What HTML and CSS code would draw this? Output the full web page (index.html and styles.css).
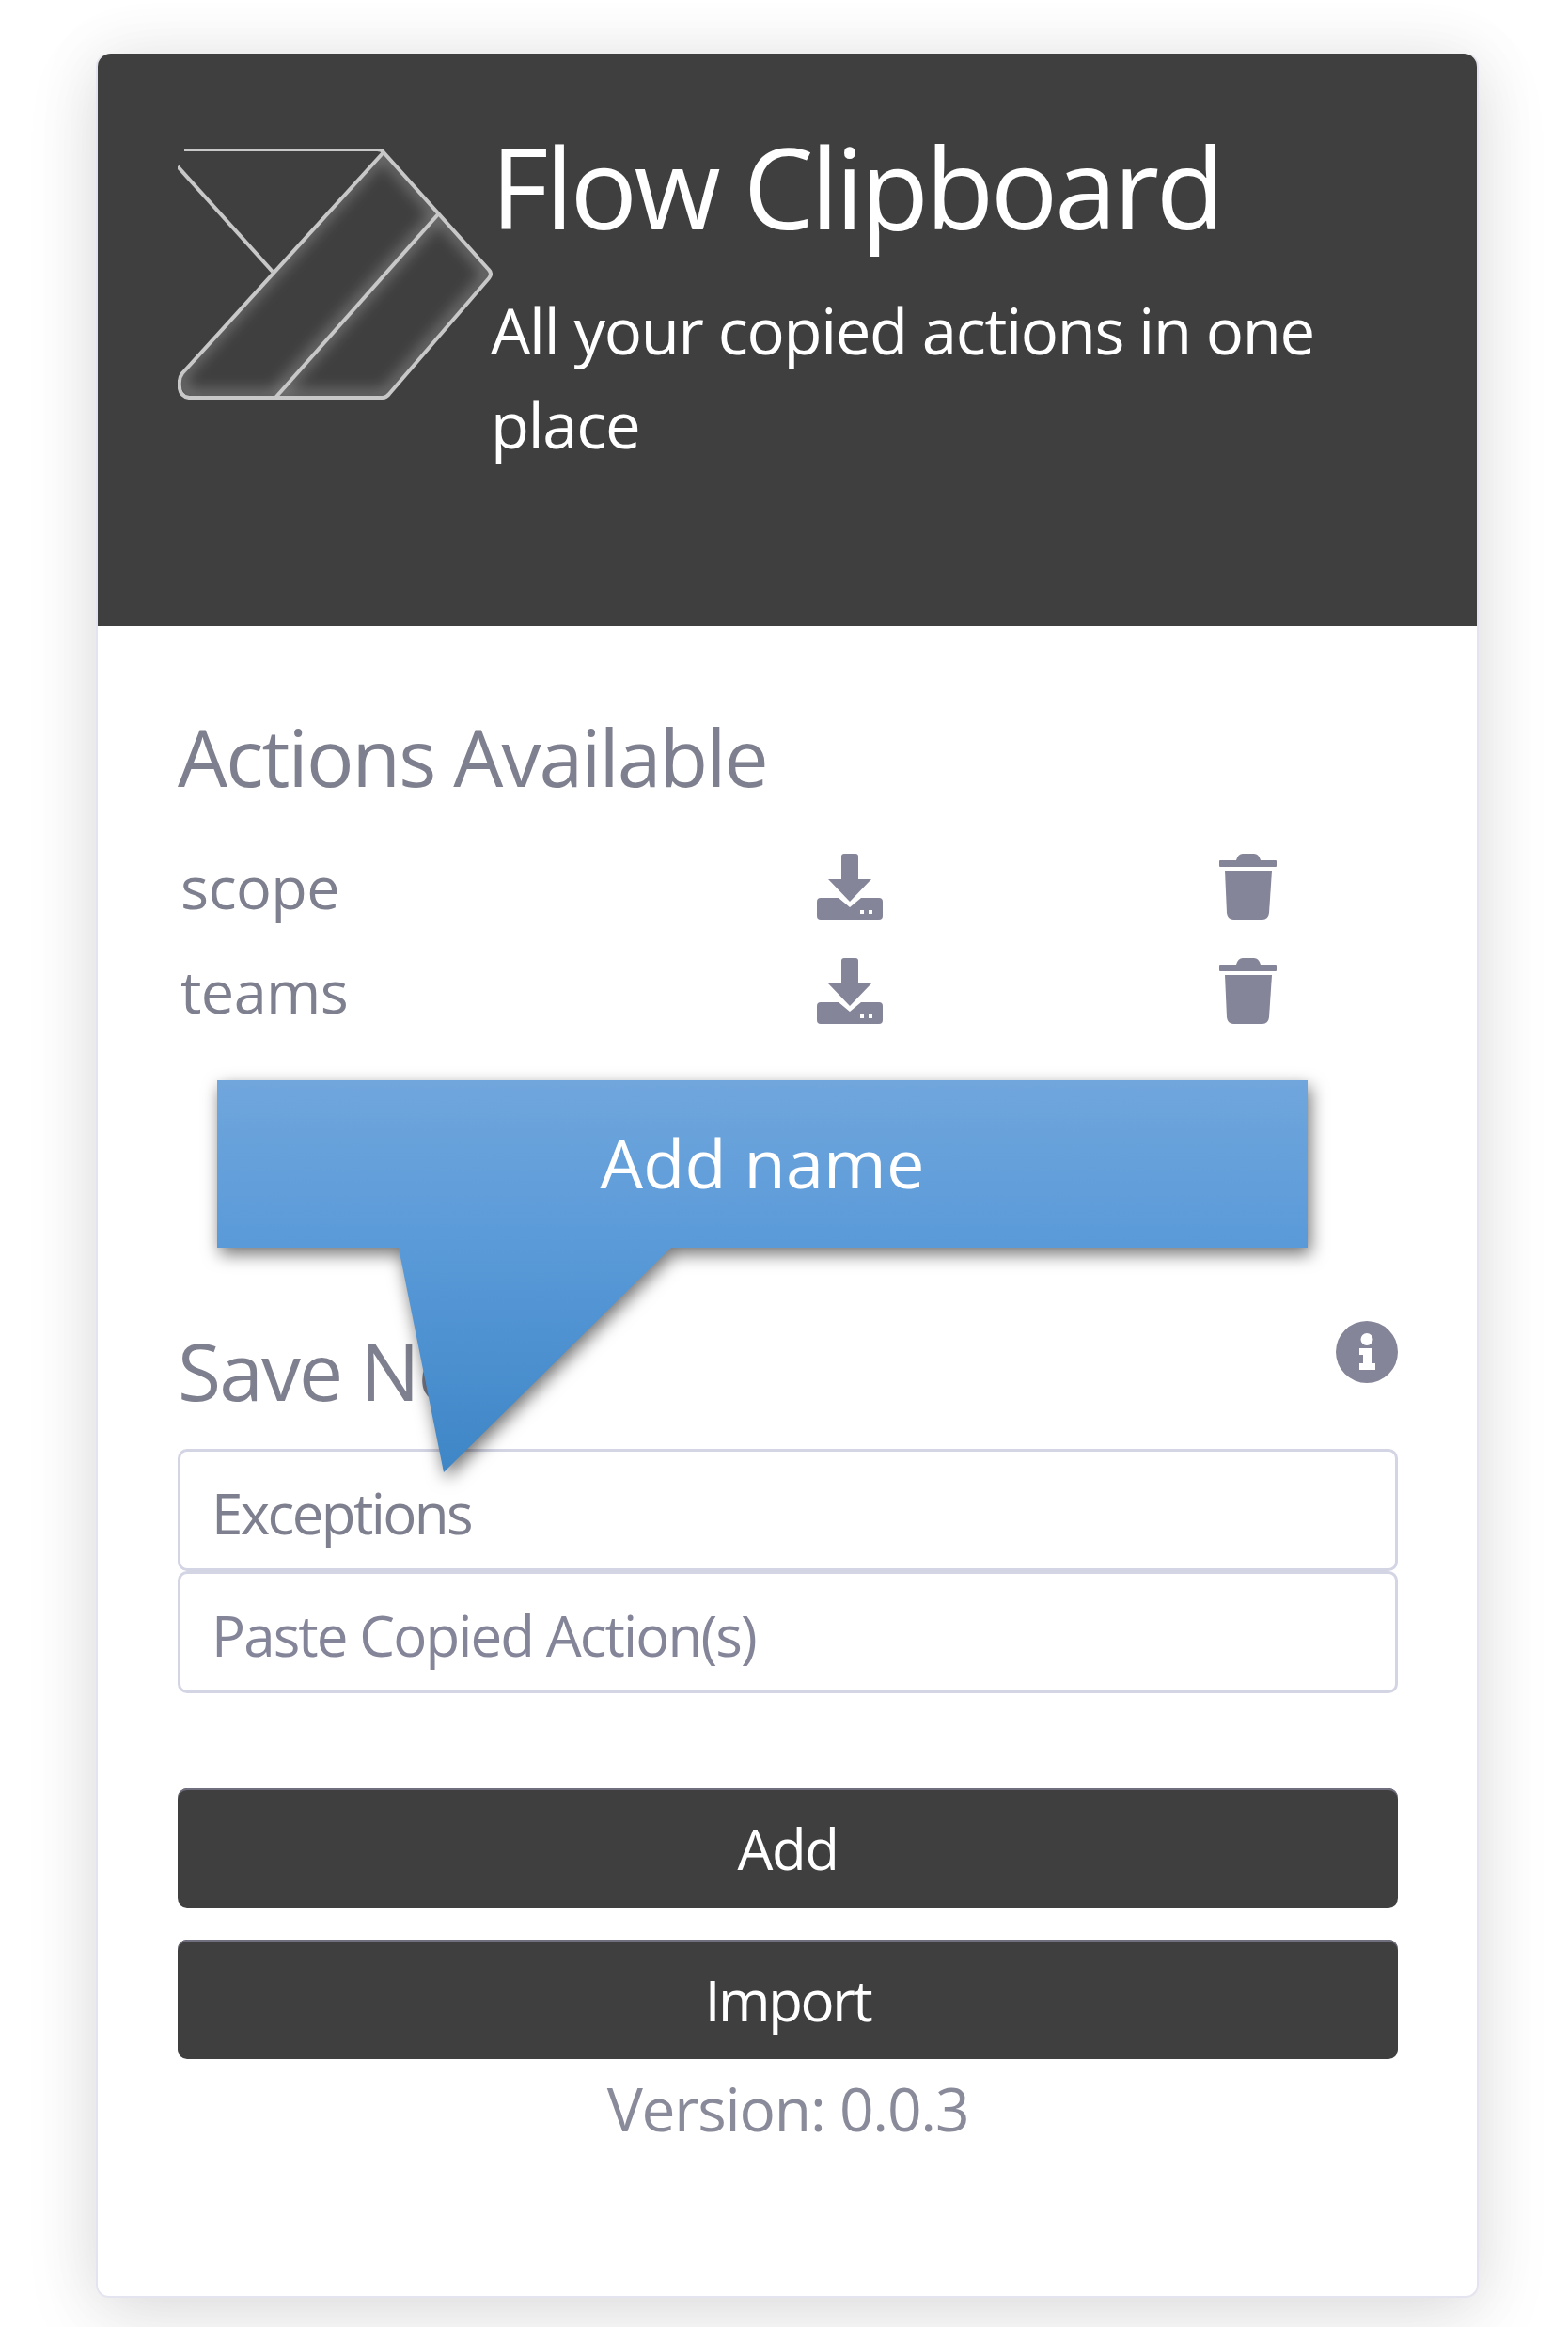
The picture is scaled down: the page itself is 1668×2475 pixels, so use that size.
FILE: index.html
```html
<!DOCTYPE html>
<html lang="en">
<head>
<meta charset="utf-8">
<title>Flow Clipboard</title>
<link rel="stylesheet" href="styles.css">
</head>
<body>
<main class="card">
  <header class="hero">
    <svg class="logo" viewBox="0 0 340 272" aria-hidden="true">
      <defs>
        <filter id="glow" x="-10%" y="-10%" width="120%" height="120%"><feGaussianBlur stdDeviation="8"/></filter>
        <clipPath id="band"><path d="M218 3 L333 132 L221 262 H10 Q-2 250 4 238 Z"/></clipPath>
      </defs>
      <g clip-path="url(#band)">
        <g filter="url(#glow)" class="logo-glow">
          <path d="M218 3 L277 69 L104 262 H10 Q-2 250 4 238 Z"/>
          <path d="M277 69 L333 132 L221 262 H104 Z"/>
        </g>
      </g>
      <g class="logo-lines">
        <path d="M7 0 H212 Q217 0 219 3 L331 128 Q335 132 331 137 L225 260 Q222 264 218 264 H12 Q0 262 2 246 Q2 242 5 238 L219 3"/>
        <path d="M0 18 L101 130"/>
        <path d="M277 69 L104 264"/>
      </g>
    </svg>
    <div class="hero-text">
      <h1 class="title">Flow Clipboard</h1>
      <p class="lead">All your copied actions in one place</p>
    </div>
  </header>

  <section class="content">
    <h2 class="heading">Actions Available</h2>
    <ul class="actions">
      <li class="action">
        <span class="action-name">scope</span>
        <svg class="icon-download" viewBox="0 0 70 70" aria-hidden="true"><path d="M26 3 Q26 0 29 0 H41 Q44 0 44 3 V27 H58 L35 51 L12 27 H26 Z"/><path fill-rule="evenodd" d="M4 47 H23 L35 57 L47 47 H66 Q70 47 70 51 V66 Q70 70 66 70 H4 Q0 70 0 66 V51 Q0 47 4 47 Z M46 60 V64 H50 V60 Z M55 60 V64 H59 V60 Z"/></svg>
        <svg class="icon-trash" viewBox="0 0 61 70" aria-hidden="true"><path d="M1 7 H18 Q20 0 25 0 H37 Q42 0 44 7 H60 Q61 7 61 8 V13 Q61 14 60 14 H1 Q0 14 0 13 V8 Q0 7 1 7 Z"/><path d="M6 18 H56 L53 63 Q52 70 46 70 H15 Q9 70 8 63 Z"/></svg>
      </li>
      <li class="action">
        <span class="action-name">teams</span>
        <svg class="icon-download" viewBox="0 0 70 70" aria-hidden="true"><path d="M26 3 Q26 0 29 0 H41 Q44 0 44 3 V27 H58 L35 51 L12 27 H26 Z"/><path fill-rule="evenodd" d="M4 47 H23 L35 57 L47 47 H66 Q70 47 70 51 V66 Q70 70 66 70 H4 Q0 70 0 66 V51 Q0 47 4 47 Z M46 60 V64 H50 V60 Z M55 60 V64 H59 V60 Z"/></svg>
        <svg class="icon-trash" viewBox="0 0 61 70" aria-hidden="true"><path d="M1 7 H18 Q20 0 25 0 H37 Q42 0 44 7 H60 Q61 7 61 8 V13 Q61 14 60 14 H1 Q0 14 0 13 V8 Q0 7 1 7 Z"/><path d="M6 18 H56 L53 63 Q52 70 46 70 H15 Q9 70 8 63 Z"/></svg>
      </li>
    </ul>

    <div class="save-row">
      <h2 class="heading">Save New</h2>
      <svg class="icon-info" viewBox="0 0 66 66" aria-hidden="true"><path fill-rule="evenodd" d="M33 0 A33 33 0 1 1 33 66 A33 33 0 1 1 33 0 Z M33 13 A6.500 6.500 0 1 0 33 26 A6.500 6.500 0 1 0 33 13 Z M25 29 V36 H29 V45 H25 V52 H42 V45 H38 V29 Z"/></svg>
    </div>
    <input class="field field-name" type="text" value="Exceptions" aria-label="Name">
    <input class="field" type="text" placeholder="Paste Copied Action(s)" aria-label="Actions">
    <button class="btn btn-add" type="button">Add</button>
    <button class="btn btn-import" type="button">Import</button>
    <p class="version">Version: 0.0.3</p>
  </section>

  <aside class="callout"><div class="callout-shape"><span class="callout-text">Add name</span></div></aside>
</main>
</body>
</html>
```
FILE: styles.css
```css
* { box-sizing: border-box; }
html, body { margin: 0; background: #fff; }
body {
  padding: 57px 96px 31px 102px;
  font-family: "Open Sans", "Noto Sans", sans-serif;
  color: #7f808f;
}
.card {
  position: relative;
  width: 1471px;
  height: 2387px;
  background: #fff;
  border: 2px solid #e3e4ef;
  border-top: 0;
  border-radius: 14px;
  box-shadow: 0 20px 80px rgba(0, 0, 0, .1), 0 0 70px rgba(0, 0, 0, .07);
}
.hero {
  display: flex;
  align-items: flex-start;
  height: 609px;
  padding: 102px 0 0 85px;
  background: #3f3f3f;
  border-radius: 14px 14px 0 0;
  color: #fff;
  filter: blur(.5px);
}
.logo { width: 340px; height: 272px; flex: none; }
.logo-glow { fill: none; stroke: #808080; stroke-width: 10; }
.logo-lines { fill: none; stroke: #c8c8c8; stroke-width: 4; stroke-linejoin: round; }
.hero-text { margin: -32px 0 0 -7px; width: 930px; }
.title { margin: 0; font-size: 119px; font-weight: 400; line-height: 142px; letter-spacing: -3.5px; }
.lead { margin: 32px 0 0; font-size: 67px; line-height: 100px; letter-spacing: -1.3px; }
.content { padding: 89px 84px 0 85px; filter: blur(.5px); }
.heading { margin: 0; font-size: 84px; font-weight: 400; line-height: 100px; letter-spacing: -1.9px; }
.actions { list-style: none; margin: 32px 0 0; padding: 0 0 0 3px; }
.action {
  display: grid;
  grid-template-columns: 677px 428px 61px;
  align-items: center;
  height: 111px;
  font-size: 63px;
  letter-spacing: -.6px;
}
.action svg { display: block; fill: #85859a; }
.icon-download { width: 70px; height: 70px; }
.icon-trash { width: 61px; height: 70px; }
.save-row { display: flex; justify-content: space-between; align-items: flex-start; margin-top: 299px; }
.icon-info { width: 66px; height: 66px; flex: none; fill: #85859a; margin-top: -3px; }
.field {
  display: block;
  width: 100%;
  height: 130px;
  padding: 6px 33px 0;
  border: 3px solid #d3d4e4;
  border-radius: 10px;
  background: #fff;
  font: inherit;
  font-size: 60px;
  letter-spacing: -1.9px;
  color: #7f808f;
}
.field-name { letter-spacing: -2.6px; }
.field::placeholder { color: #85859a; opacity: 1; }
.save-row + .field { margin-top: 33px; }
.btn {
  display: block;
  width: 100%;
  height: 127px;
  border: 0;
  border-radius: 10px;
  background: #3f3f3f;
  box-shadow: inset 0 2px 0 #6f6f80;
  color: #fff;
  font: inherit;
  font-size: 60px;
  letter-spacing: -1.4px;
}
.btn-add { margin-top: 101px; }
.btn-import { margin-top: 34px; letter-spacing: -2.4px; }
.version { margin: 3px 0 0; font-size: 64px; line-height: 100px; text-align: center; letter-spacing: -1.2px; color: #8a8b9a; }
.callout {
  position: absolute;
  left: 127px;
  top: 1092px;
  width: 1160px;
  height: 417px;
  filter: drop-shadow(3px 7px 9px rgba(0, 0, 0, .55));
}
.callout-shape {
  height: 100%;
  padding-top: 45px;
  text-align: center;
  background: linear-gradient(180deg, #70a6dc 0%, #5a9ad9 42%, #3e86c6 100%);
  clip-path: polygon(0 0, 100% 0, 100% 178px, 483px 178px, 241px 100%, 193px 178px, 0 178px);
}
.callout-text { color: #fff; font-size: 72px; line-height: 84px; letter-spacing: .2px; }
```
